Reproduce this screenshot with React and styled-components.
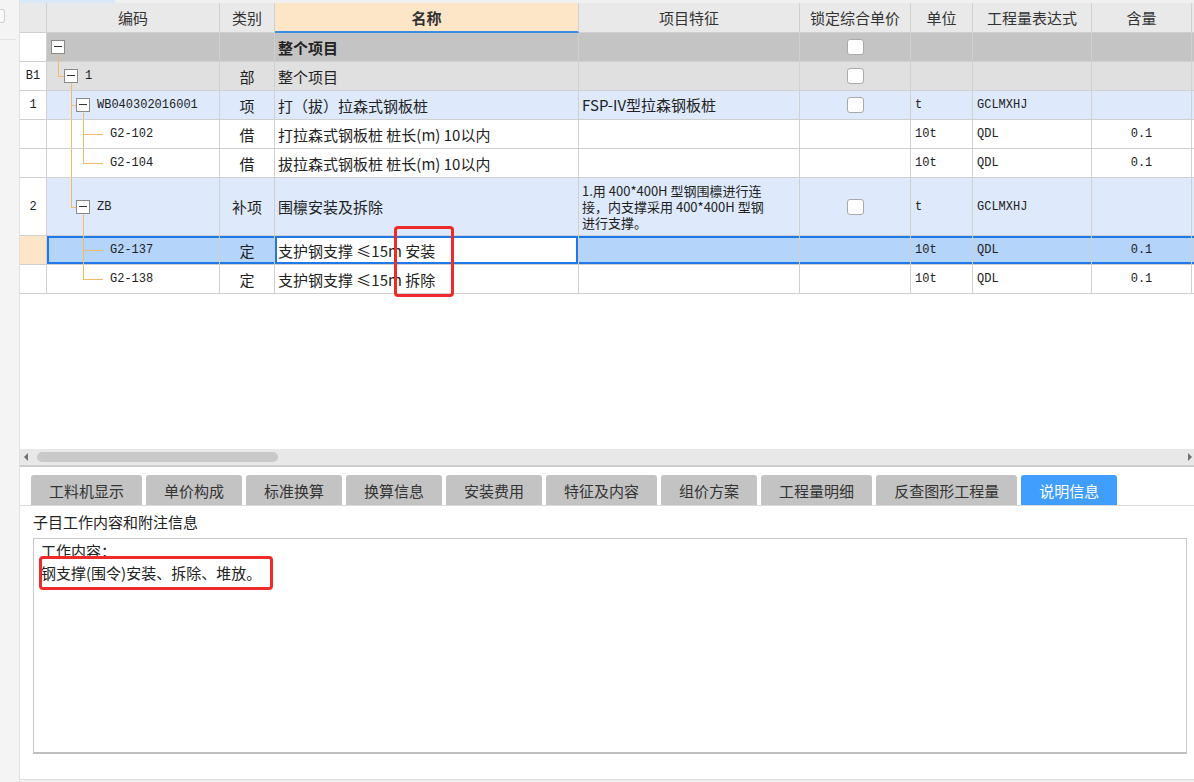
import React from 'react'
import styled, { createGlobalStyle } from 'styled-components'

const CJK = `"Noto Sans CJK SC", "Noto Sans", sans-serif`
const MONO = `"Liberation Mono", "Noto Sans CJK SC", monospace`
const BLUE = '#1f78e8'
const LINE = '#d0d0d0'

const GlobalStyle = createGlobalStyle`
  html, body {
    margin: 0;
    padding: 0;
    background: #fff;
  }
  body {
    font-family: ${CJK};
    color: #222;
  }
  * {
    box-sizing: border-box;
  }
`

const Page = styled.div`
  position: relative;
  display: flex;
  width: 1194px;
  height: 782px;
  overflow: hidden;
  background: #fff;
`

// narrow strip on the far left
const Sidebar = styled.div`
  width: 20px;
  flex: none;
  display: flex;
  flex-direction: column;
  background: #f4f4f4;
  border-right: 1px solid #e2e2e2;
`
const SideTab = styled.div`
  width: 5px;
  height: 14px;
  margin-top: 9px;
  border: 1px solid #cfcfcf;
  border-left: none;
  border-radius: 0 3px 3px 0;
  background: #fafafa;
`
const SideRule = styled.div`
  width: 16px;
  margin-top: 16px;
  border-top: 1px solid #e2e2e2;
`

const Main = styled.div`
  flex: 1;
  min-width: 0;
  display: flex;
  flex-direction: column;
`

const TopStrip = styled.div`
  height: 3px;
  flex: none;
  display: flex;
  background: #f1f1f1;
`
const TopSeg = styled.div`
  width: 95px;
  background: #d9e8f8;
`

const GridArea = styled.div`
  height: 446px;
  flex: none;
  overflow: hidden;
  background: #fff;
`

const COLS = '27px 173px 55px 304px 221px 111px 62px 119px 100px 100px'

const Row = styled.div`
  display: grid;
  grid-template-columns: ${COLS};
  height: ${p => p.$h}px;
`

const TONES = {
  head: '#e9e9e9',
  group: '#c4c4c4',
  section: '#e0e0e0',
  item: '#deeafc',
  plain: '#ffffff',
  selected: '#b4d4fa',
}

const SHADOWS = {
  row: `inset 0 2px 0 ${BLUE}, inset 0 -2px 0 ${BLUE}`,
  first: `inset 2px 0 0 ${BLUE}, inset 0 2px 0 ${BLUE}, inset 0 -2px 0 ${BLUE}`,
  edit: `inset 0 0 0 2px ${BLUE}`,
}

const Cell = styled.div`
  position: relative;
  display: flex;
  align-items: center;
  justify-content: ${p => p.$align || 'flex-start'};
  padding: 0 ${p => (p.$pad != null ? p.$pad : 3)}px;
  background: ${p => p.$bg};
  border-right: 1px solid ${LINE};
  border-bottom: 1px solid ${LINE};
  box-shadow: ${p => (p.$sel ? SHADOWS[p.$sel] : 'none')};
  font-size: 15px;
  color: #222;
  white-space: nowrap;
  overflow: hidden;
`

const HeadCell = styled(Cell)`
  justify-content: center;
  color: #333;
`

const NameHead = styled(HeadCell)`
  background: #fde6c8;
  font-weight: 700;
  border-bottom: 2px solid #3a8ee6;
`

const NumCell = styled(Cell)`
  justify-content: center;
  font-family: ${MONO};
  font-size: 12px;
`

const Code = styled.span`
  font-family: ${MONO};
  font-size: 12px;
  color: #222;
`

const Mono = styled.span`
  font-family: ${MONO};
  font-size: 12px;
`

const Name = styled.span`
  font-weight: ${p => (p.$bold ? 700 : 400)};
`

const Feature = styled.div`
  font-size: ${p => (p.$small ? 13 : 15)}px;
  line-height: 16px;
  white-space: nowrap;
`

const CodeInner = styled.div`
  position: relative;
  display: flex;
  align-items: center;
  gap: 7px;
  padding-left: ${p => p.$indent}px;
`

const GuideSvg = styled.svg`
  position: absolute;
  left: 0;
  top: 0;
  pointer-events: none;
  stroke: #f3b968;
  stroke-width: 1;
`

const Toggle = styled.span`
  position: relative;
  width: 14px;
  height: 14px;
  flex: none;
  border: 1px solid #8a8a8a;
  background: #fff;
  &::after {
    content: '';
    position: absolute;
    left: 2px;
    right: 2px;
    top: 5px;
    height: 1px;
    background: #333;
  }
`

const Check = styled.span`
  width: 17px;
  height: 16px;
  border: 1px solid #a9a9a9;
  border-radius: 3px;
  background: #fff;
`

const HScroll = styled.div`
  height: 18px;
  flex: none;
  display: flex;
  align-items: center;
  gap: 9px;
  padding: 0 2px 0 4px;
  background: #e8e8e8;
  border-bottom: 2px solid #cbcbcb;
`
const Arrow = styled.span`
  width: 0;
  height: 0;
  border-top: 4px solid transparent;
  border-bottom: 4px solid transparent;
  ${p => (p.$dir === 'left' ? 'border-right: 4px solid #707070;' : 'border-left: 4px solid #707070;')}
`
const Thumb = styled.span`
  width: 241px;
  height: 10px;
  border-radius: 5px;
  background: #c9c9c9;
`
const Spacer = styled.span`
  flex: 1;
`

const Bottom = styled.div`
  flex: 1;
  display: flex;
  flex-direction: column;
  padding-top: 8px;
`

const TabBar = styled.div`
  display: flex;
  gap: 4px;
  height: 31px;
  padding-left: 11px;
  border-bottom: 1px solid #dadada;
`
const Tab = styled.div`
  height: 30px;
  display: flex;
  align-items: center;
  padding: 0 18px;
  border-radius: 3px 3px 0 0;
  background: ${p => (p.$active ? '#409eff' : '#c3c3c3')};
  color: ${p => (p.$active ? '#fff' : '#333')};
  font-size: 15px;
`

const Caption = styled.div`
  margin: 6px 0 0 13px;
  font-size: 15px;
  line-height: 20px;
  color: #222;
`

const NoteBox = styled.div`
  height: 216px;
  margin: 6px 7px 0 13px;
  padding: 1px 7px;
  border: 1px solid #c9c9c9;
  border-bottom: 2px solid #bdbdbd;
  font-size: 15px;
  line-height: 22px;
  color: #222;
`

const Footer = styled.div`
  height: 3px;
  flex: none;
  background: #f1f1f1;
  border-top: 1px solid #dcdcdc;
`

// red annotation frames drawn on top of the screenshot
const Mark = styled.div`
  position: absolute;
  left: ${p => p.$x}px;
  top: ${p => p.$y}px;
  width: ${p => p.$w}px;
  height: ${p => p.$h}px;
  border: 3px solid #ee2a2a;
  border-radius: 4px;
  pointer-events: none;
`

const headers = ['', '编码', '类别', '名称', '项目特征', '锁定综合单价', '单位', '工程量表达式', '含量', '']

const rows = [
  { num: '', code: '', box: 11, type: '', name: '整个项目', bold: true, lock: true, tone: 'group', g: { down: [11] } },
  { num: 'B1', code: '1', box: 24, type: '部', name: '整个项目', lock: true, tone: 'section', g: { top: [11], elbow: [11, 17], down: [24] } },
  {
    num: '1', code: 'WB040302016001', box: 36, type: '项', name: '打（拔）拉森式钢板桩',
    feat: ['FSP-IV型拉森钢板桩'], lock: true, unit: 't', expr: 'GCLMXHJ', tone: 'item',
    g: { full: [24], elbow: [24, 29], down: [36] },
  },
  { num: '', code: 'G2-102', type: '借', name: '打拉森式钢板桩 桩长(m) 10以内', unit: '10t', expr: 'QDL', qty: '0.1', tone: 'plain', g: { full: [24, 36], elbow: [36, 56] } },
  { num: '', code: 'G2-104', type: '借', name: '拔拉森式钢板桩 桩长(m) 10以内', unit: '10t', expr: 'QDL', qty: '0.1', tone: 'plain', g: { full: [24], top: [36], elbow: [36, 56] } },
  {
    num: '2', code: 'ZB', box: 36, type: '补项', name: '围檩安装及拆除', h: 58, small: true,
    feat: ['1.用 400*400H 型钢围檩进行连', '接，内支撑采用 400*400H 型钢', '进行支撑。'],
    lock: true, unit: 't', expr: 'GCLMXHJ', tone: 'item',
    g: { top: [24], elbow: [24, 29], down: [36] },
  },
  { num: '', code: 'G2-137', type: '定', name: '支护钢支撑 ≤15m 安装', unit: '10t', expr: 'QDL', qty: '0.1', tone: 'selected', g: { full: [36], elbow: [36, 56] } },
  { num: '', code: 'G2-138', type: '定', name: '支护钢支撑 ≤15m 拆除', unit: '10t', expr: 'QDL', qty: '0.1', tone: 'plain', g: { top: [36], elbow: [36, 56] } },
]

const tabs = ['工料机显示', '单价构成', '标准换算', '换算信息', '安装费用', '特征及内容', '组价方案', '工程量明细', '反查图形工程量', '说明信息']

function Guides({ h, g }) {
  const m = Math.floor(h / 2) + 0.5
  return (
    <GuideSvg width={70} height={h}>
      {(g.full || []).map(x => <line key={`f${x}`} x1={x + 0.5} y1={0} x2={x + 0.5} y2={h} />)}
      {(g.top || []).map(x => <line key={`t${x}`} x1={x + 0.5} y1={0} x2={x + 0.5} y2={m} />)}
      {(g.down || []).map(x => <line key={`d${x}`} x1={x + 0.5} y1={m + 7} x2={x + 0.5} y2={h} />)}
      {g.elbow && <line x1={g.elbow[0]} y1={m} x2={g.elbow[1]} y2={m} />}
    </GuideSvg>
  )
}

function DataRow({ r }) {
  const h = r.h || 29
  const bg = TONES[r.tone]
  const sel = r.tone === 'selected'
  const s = kind => (sel ? kind : undefined)
  return (
    <Row $h={h}>
      <NumCell $bg={sel ? '#fde6c8' : '#fff'}>{r.num}</NumCell>
      <Cell $bg={bg} $pad={0} $sel={s('first')}>
        <Guides h={h} g={r.g} />
        <CodeInner $indent={r.box ? r.box - 7 : 63}>
          {r.box && <Toggle />}
          {r.code && <Code>{r.code}</Code>}
        </CodeInner>
      </Cell>
      <Cell $bg={bg} $align="center" $sel={s('row')}>{r.type}</Cell>
      <Cell $bg={sel ? '#fff' : bg} $sel={s('edit')}>
        <Name $bold={r.bold}>{r.name}</Name>
      </Cell>
      <Cell $bg={bg} $pad={3} $sel={s('row')}>
        {r.feat && (
          <Feature $small={r.small}>
            {r.feat.map(line => <div key={line}>{line}</div>)}
          </Feature>
        )}
      </Cell>
      <Cell $bg={bg} $align="center" $sel={s('row')}>{r.lock && <Check />}</Cell>
      <Cell $bg={bg} $pad={4} $sel={s('row')}><Mono>{r.unit}</Mono></Cell>
      <Cell $bg={bg} $pad={4} $sel={s('row')}><Mono>{r.expr}</Mono></Cell>
      <Cell $bg={bg} $align="center" $sel={s('row')}><Mono>{r.qty}</Mono></Cell>
      <Cell $bg={bg} $sel={s('row')} />
    </Row>
  )
}

export default function App() {
  return (
    <Page>
      <GlobalStyle />
      <Sidebar>
        <SideTab />
        <SideRule />
      </Sidebar>
      <Main>
        <TopStrip>
          <TopSeg />
        </TopStrip>
        <GridArea>
          <Row $h={30}>
            {headers.map((label, i) =>
              label === '名称'
                ? <NameHead key={i} $bg="#fde6c8">{label}</NameHead>
                : <HeadCell key={i} $bg={TONES.head}>{label}</HeadCell>
            )}
          </Row>
          {rows.map((r, i) => <DataRow key={i} r={r} />)}
        </GridArea>
        <HScroll>
          <Arrow $dir="left" />
          <Thumb />
          <Spacer />
          <Arrow $dir="right" />
        </HScroll>
        <Bottom>
          <TabBar>
            {tabs.map((t, i) => <Tab key={t} $active={i === tabs.length - 1}>{t}</Tab>)}
          </TabBar>
          <Caption>子目工作内容和附注信息</Caption>
          <NoteBox>
            <div>工作内容：</div>
            <div>钢支撑(围令)安装、拆除、堆放。</div>
          </NoteBox>
        </Bottom>
        <Footer />
      </Main>
      <Mark $x={394} $y={226} $w={60} $h={71} />
      <Mark $x={39} $y={556} $w={234} $h={34} />
    </Page>
  )
}
